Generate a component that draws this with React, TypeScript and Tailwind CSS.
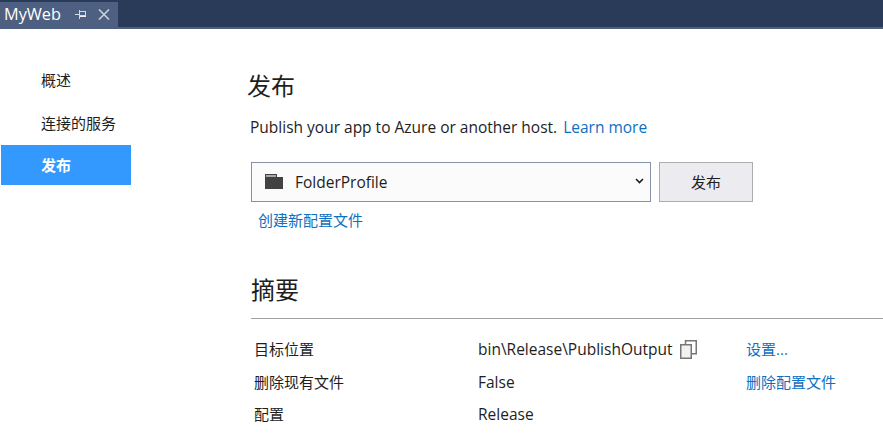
const PinIcon = () => (
  <svg width="11" height="9" viewBox="0 0 11 9" fill="none" stroke="#d5dae3" strokeWidth="1" shapeRendering="crispEdges">
    <path d="M0 4.500h4M4.500 0v9M4.500 1.500h6v4h-6" />
    <path d="M4.500 6.500h6" stroke="#eef0f4" />
  </svg>
);

const CloseIcon = () => (
  <svg width="12" height="11" viewBox="0 0 12 11" fill="none" stroke="#c9d0dc" strokeWidth="1.600">
    <path d="M1 .500l10 10M11 .500l-10 10" />
  </svg>
);

const FolderIcon = () => (
  <svg width="18" height="15" viewBox="0 0 18 15" className="mb-[3px]">
    <path d="M0 0h12v3h6v12H0z" fill="#424242" />
    <path d="M1 1h10v2H1z" fill="#a8a8a8" />
  </svg>
);

const CopyIcon = () => (
  <svg width="17" height="19" viewBox="0 0 17 19" fill="none" stroke="#777777" strokeWidth="1.500">
    <path d="M5.500 4V.75h10.750v13H12" />
    <rect x=".75" y="4.750" width="10.500" height="13.500" fill="#f2f2f2" />
  </svg>
);

const Row = ({ label, value, link, icon }: { label: string; value: string; link?: string; icon?: boolean }) => (
  <div className="flex h-[32.500px] items-center text-[15.500px] text-[#1e1e1e]">
    <div className="w-[227px] pl-[3px] text-[15px]">{label}</div>
    <div className="flex w-[268px] items-center gap-[7px] pt-px">
      {value}
      {icon && <CopyIcon />}
    </div>
    {link && <a className="text-[15px] text-[#0e70c0]">{link}</a>}
  </div>
);

export default function App() {
  return (
    <div className="h-[448px] w-[883px] overflow-hidden bg-white font-['Open_Sans','Noto_Sans_CJK_SC',sans-serif] text-[#1e1e1e]">
      <div className="flex h-[29px] items-end border-b-2 border-[#4d6082] bg-[#2a3a59]">
        <div className="flex h-[25px] w-[118px] items-center bg-[#4d6082] pl-[4px] text-[16.300px] text-white">
          <span>MyWeb</span>
          <span className="ml-[14px] flex"><PinIcon /></span>
          <span className="ml-[12px] flex"><CloseIcon /></span>
        </div>
      </div>
      <div className="flex">
        <nav className="ml-[1px] flex w-[130px] flex-col gap-[2px] pt-[32px] text-[15px]">
          <div className="flex h-[40px] items-center pb-[2px] pl-[40px]">概述</div>
          <div className="flex h-[40px] items-center pl-[40px]">连接的服务</div>
          <div className="flex h-[40px] items-center bg-[#3399ff] pl-[40px] font-bold text-white">发布</div>
        </nav>
        <main className="flex-1 pl-[117px]">
          <h1 className="mt-[41px] -ml-px text-[24px] leading-[32px]">发布</h1>
          <p className="mt-[13px] pl-[2px] text-[15.500px] leading-[24px]">
            Publish your app to Azure or another host.
            <a className="ml-[6px] text-[#0e70c0]">Learn more</a>
          </p>
          <div className="mt-[23px] flex gap-[8px] pl-[3px]">
            <div className="flex h-[40px] w-[400px] items-center border border-[#8592a8] bg-[#fbfbfb] pl-[13px] pr-[6px] pt-px text-[15.500px]">
              <FolderIcon />
              <span className="ml-[12px] flex-1">FolderProfile</span>
              <svg width="9" height="6" viewBox="0 0 9 6" fill="none" stroke="#1e1e1e" strokeWidth="1.600" className="mb-[4px]">
                <path d="M1 1l3.500 3.500L8 1" />
              </svg>
            </div>
            <button className="h-[40px] w-[94px] border border-[#adadad] bg-[#ecebf0] text-[15px]">发布</button>
          </div>
          <a className="mt-[8px] block pl-[10px] text-[15px] leading-[20px] text-[#0e70c0]">创建新配置文件</a>
          <h2 className="mt-[44px] pl-[3px] text-[24px] leading-[32px]">摘要</h2>
          <div className="ml-[3px] mt-[12px] border-t border-[#a0a0a0] pt-[14px]">
            <Row label="目标位置" value="bin\Release\PublishOutput" link="设置..." icon />
            <Row label="删除现有文件" value="False" link="删除配置文件" />
            <Row label="配置" value="Release" />
          </div>
        </main>
      </div>
    </div>
  );
}
